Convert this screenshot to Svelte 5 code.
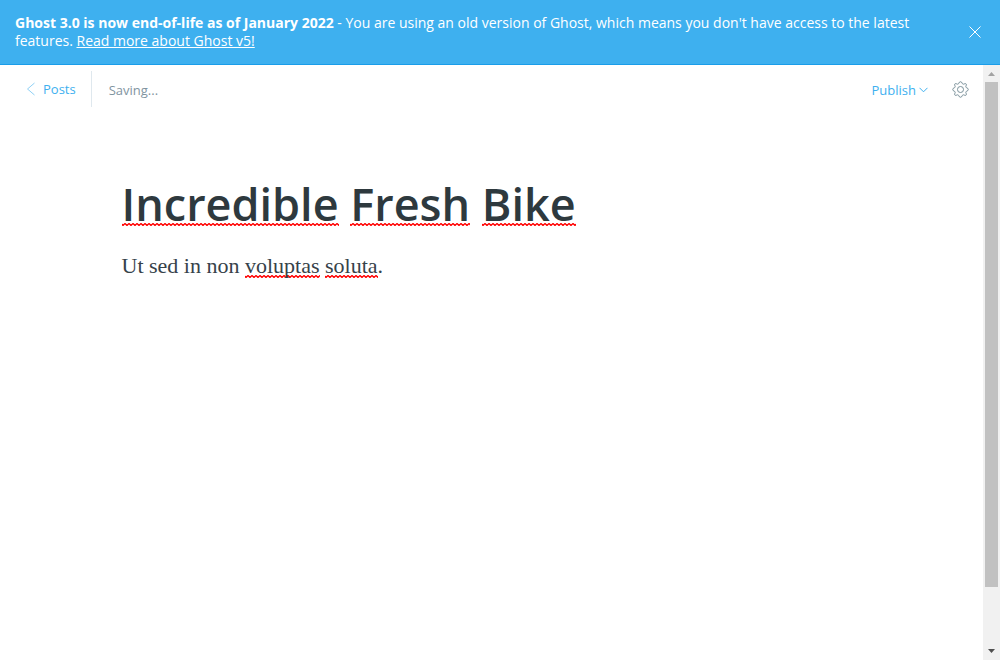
<script>
  let bannerOpen = $state(true);
  const titleWords = ['Incredible', 'Fresh', 'Bike'];
</script>

<div class="app">
  {#if bannerOpen}
    <aside class="banner">
      <p>
        <strong>Ghost 3.0 is now end-of-life as of January 2022</strong> - You are using an old version of Ghost, which means you don't have access to the latest features.
        <a href="#upgrade">Read more about Ghost v5!</a>
      </p>
      <button class="close" aria-label="Close" onclick={() => (bannerOpen = false)}>
        <svg width="12" height="12" viewBox="0 0 12 12"><path d="M0.500 0.500 11.500 11.500M11.500 0.500 0.500 11.500" /></svg>
      </button>
    </aside>
  {/if}

  <div class="viewport">
    <main>
      <header>
        <a class="back" href="#posts">
          <svg width="9" height="14" viewBox="0 0 9 14"><path d="M8.500 1 1.500 7 8.500 13" /></svg>
          Posts
        </a>
        <span class="status">Saving...</span>
        <button class="publish">
          Publish
          <svg width="9" height="6" viewBox="0 0 9 6"><path d="M0.5 0.8 4.5 4.8 8.5 0.8" /></svg>
        </button>
        <button class="settings" aria-label="Settings">
          <svg width="17" height="17" viewBox="0 0 18 18">
            <path d="M7.3 2.2 C7.7 0.3 10.3 0.3 10.7 2.2 C11 3.3 12 3.7 12.9 3.1 C14.6 2.1 16 3.5 14.9 5.1 C14.3 6 14.7 7 15.8 7.3 C17.7 7.7 17.7 10.3 15.8 10.7 C14.7 11 14.3 12 14.9 12.9 C16 14.5 14.5 16 12.9 14.9 C12 14.3 11 14.7 10.7 15.8 C10.3 17.7 7.7 17.7 7.3 15.8 C7 14.7 6 14.3 5.1 14.9 C3.5 16 2 14.5 3.1 12.9 C3.7 12 3.3 11 2.2 10.7 C0.3 10.3 0.3 7.7 2.2 7.3 C3.3 7 3.7 6 3.1 5.1 C2 3.5 3.5 2 5.1 3.1 C6 3.7 7 3.3 7.3 2.2Z" />
            <circle cx="9" cy="9" r="3.2" />
          </svg>
        </button>
      </header>

      <article>
        <h1 contenteditable="true" spellcheck="false">
          {#each titleWords as word, i}{i ? ' ' : ''}<span class="misspelt">{word}</span>{/each}
        </h1>
        <div class="body" role="textbox" aria-label="Post body" tabindex="0" contenteditable="true" spellcheck="false">
          <p>Ut sed in non <span class="misspelt">voluptas</span> <span class="misspelt">soluta</span>.</p>
        </div>
      </article>
    </main>

    <div class="scrollbar" aria-hidden="true">
      <svg width="17" height="17" viewBox="0 0 17 17"><path fill="#a3a3a3" d="M5 11h7L8.500 7z" /></svg>
      <div class="track"><div class="thumb"></div></div>
      <svg width="17" height="17" viewBox="0 0 17 17"><path fill="#505050" d="M5 6h7L8.500 10z" /></svg>
    </div>
  </div>
</div>

<style>
  :global(body) {
    margin: 0;
    background: #fff;
  }
  .app {
    display: flex;
    flex-direction: column;
    min-height: 100vh;
    font-family: "Open Sans", "Noto Sans", sans-serif;
    font-size: 13px;
    color: #15171a;
  }
  button {
    padding: 0;
    border: 0;
    background: none;
    font: inherit;
    cursor: pointer;
  }
  svg {
    display: block;
    flex: none;
  }
  .banner {
    display: flex;
    align-items: center;
    justify-content: space-between;
    gap: 24px;
    padding: 14px 19px 14px 15px;
    border-bottom: 1px solid #1a9de9;
    background: #3eb0ef;
    color: #fff;
    font-size: 14px;
  }
  .banner p {
    max-width: 910px;
    margin: 0;
    line-height: 18px;
  }
  .banner a {
    color: inherit;
  }
  .close svg {
    fill: none;
    stroke: #fff;
  }
  .viewport {
    display: flex;
    flex: 1;
  }
  main {
    flex: 1;
    min-width: 0;
  }
  header {
    display: flex;
    align-items: center;
    padding: 6px 14px 6px 26px;
  }
  .back {
    display: flex;
    align-items: center;
    gap: 8px;
    height: 36px;
    padding-right: 15px;
    border-right: 1px solid #dfe8ee;
    color: #3eb0ef;
    text-decoration: none;
  }
  .back svg {
    fill: none;
    stroke: #8fd0f5;
  }
  .status {
    flex: 1;
    margin-top: 2px;
    padding-left: 17px;
    color: #7f949f;
  }
  .publish {
    display: flex;
    align-items: center;
    gap: 3px;
    margin-top: 2px;
    color: #3eb0ef;
  }
  .publish svg {
    fill: none;
    stroke: #3eb0ef;
  }
  .settings {
    margin-left: 24px;
  }
  .settings svg {
    fill: none;
    stroke: #738a94;
  }
  article {
    max-width: 740px;
    margin: 0 auto;
    padding: 64px 0;
  }
  h1 {
    margin: 0;
    font-size: 45px;
    font-weight: 600;
    line-height: 54px;
    color: #2e393e;
    outline: none;
  }
  .body {
    margin-top: 19px;
    font-family: "Liberation Serif", serif;
    font-size: 22px;
    line-height: 32px;
    color: #36424a;
    outline: none;
  }
  .body p {
    margin: 0;
  }
  .misspelt {
    background: url("data:image/svg+xml,%3Csvg xmlns='http://www.w3.org/2000/svg' width='4' height='3'%3E%3Cpath d='M-1 0 1 2 3 0 5 2' transform='translate(0 .5)' fill='none' stroke='red' stroke-width='1.3'/%3E%3C/svg%3E") repeat-x 0 100%;
  }
  h1 .misspelt {
    background-position: 0 calc(100% - 8px);
  }
  .scrollbar {
    display: flex;
    flex-direction: column;
    width: 17px;
    background: #f1f1f1;
  }
  .track {
    flex: 1;
    padding: 0 2px;
  }
  .thumb {
    height: 90%;
    background: #c1c1c1;
  }
</style>
